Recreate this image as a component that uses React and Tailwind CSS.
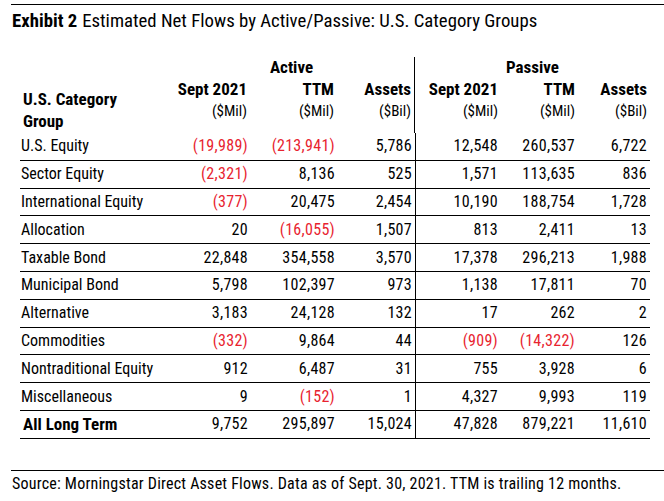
import React from "react";

const rows = [
  ["U.S. Equity", "(19,989)", "(213,941)", "5,786", "12,548", "260,537", "6,722"],
  ["Sector Equity", "(2,321)", "8,136", "525", "1,571", "113,635", "836"],
  ["International Equity", "(377)", "20,475", "2,454", "10,190", "188,754", "1,728"],
  ["Allocation", "20", "(16,055)", "1,507", "813", "2,411", "13"],
  ["Taxable Bond", "22,848", "354,558", "3,570", "17,378", "296,213", "1,988"],
  ["Municipal Bond", "5,798", "102,397", "973", "1,138", "17,811", "70"],
  ["Alternative", "3,183", "24,128", "132", "17", "262", "2"],
  ["Commodities", "(332)", "9,864", "44", "(909)", "(14,322)", "126"],
  ["Nontraditional Equity", "912", "6,487", "31", "755", "3,928", "6"],
  ["Miscellaneous", "9", "(152)", "1", "4,327", "9,993", "119"],
  ["All Long Term", "9,752", "295,897", "15,024", "47,828", "879,221", "11,610"],
];

// widths of the six number columns (label column is 150px)
const colW = ["w-[81px]", "w-[87px]", "w-[77px]", "w-[86px]", "w-[77px]", "w-[72px]"];

function HeadGroup({ title, cols, className }) {
  return (
    <div className={`flex flex-col h-[76px] ${className || ""}`}>
      <div className="h-[20px] flex items-center justify-center text-[17px] font-bold leading-none">
        {title}
      </div>
      <div className="flex">
        {cols.map((c, i) => (
          <div key={i} className={`${c.w} flex flex-col items-end pr-[3px]`}>
            <div className="h-[24px] flex items-center text-[17px] font-bold leading-none whitespace-nowrap">
              {c.name}
            </div>
            <div className="h-[20px] flex items-center text-[15px] leading-none">{c.unit}</div>
          </div>
        ))}
      </div>
    </div>
  );
}

function Row({ data, last }) {
  return (
    <div className="flex h-[27.8px] border-b border-black items-stretch">
      <div
        className={`w-[150px] flex items-center whitespace-nowrap ${
          last ? "font-bold text-[17px] pl-[3px]" : "text-[16px] pl-[1px]"
        }`}
      >
        {data[0]}
      </div>
      {data.slice(1).map((v, i) => (
        <div
          key={i}
          className={`${colW[i]} flex items-center justify-end pr-[3px] text-[16px] tracking-[0.3px] ${
            i === 3 ? "border-l border-black" : ""
          } ${v.startsWith("(") ? "text-[#e8232f]" : ""}`}
        >
          {v}
        </div>
      ))}
    </div>
  );
}

export default function App() {
  return (
    <div className="w-[664px] h-[501px] bg-white text-black font-['Roboto','Liberation_Sans',sans-serif] font-stretch-[75%]">
      <div className="pt-[4px] pl-[11px]">
        <div className="border-t border-black pt-[4px]">
          <div className="h-[24px] flex items-center pl-[1px] text-[18.75px] leading-none whitespace-nowrap">
            <span className="font-bold">Exhibit 2</span>
            <span className="ml-[5px]">Estimated Net Flows by Active/Passive: U.S. Category Groups</span>
          </div>
        </div>
      </div>

      <div className="ml-[20px] w-[630px] mt-[24px]">
        <div className="flex">
          <div className="w-[150px] pt-[32px] pl-[3px] text-[17px] font-bold leading-[21.5px]">
            U.S. Category
            <br />
            Group
          </div>
          <HeadGroup
            title="Active"
            cols={[
              { w: "w-[81px]", name: "Sept 2021", unit: "($Mil)" },
              { w: "w-[87px]", name: "TTM", unit: "($Mil)" },
              { w: "w-[77px]", name: "Assets", unit: "($Bil)" },
            ]}
          />
          <HeadGroup
            title="Passive"
            className="border-l border-black"
            cols={[
              { w: "w-[86px]", name: "Sept 2021", unit: "($Mil)" },
              { w: "w-[77px]", name: "TTM", unit: "($Mil)" },
              { w: "w-[72px]", name: "Assets", unit: "($Bil)" },
            ]}
          />
        </div>
        {rows.map((r, i) => (
          <Row key={r[0]} data={r} last={i === rows.length - 1} />
        ))}
      </div>

      <div className="pl-[11px] mt-[31px]">
        <div className="border-t border-black">
          <div className="h-[26px] flex items-center pl-[1px] text-[16px] tracking-[0.22px] leading-none whitespace-nowrap">
            Source: Morningstar Direct Asset Flows. Data as of Sept. 30, 2021. TTM is trailing 12 months.
          </div>
        </div>
      </div>
    </div>
  );
}
